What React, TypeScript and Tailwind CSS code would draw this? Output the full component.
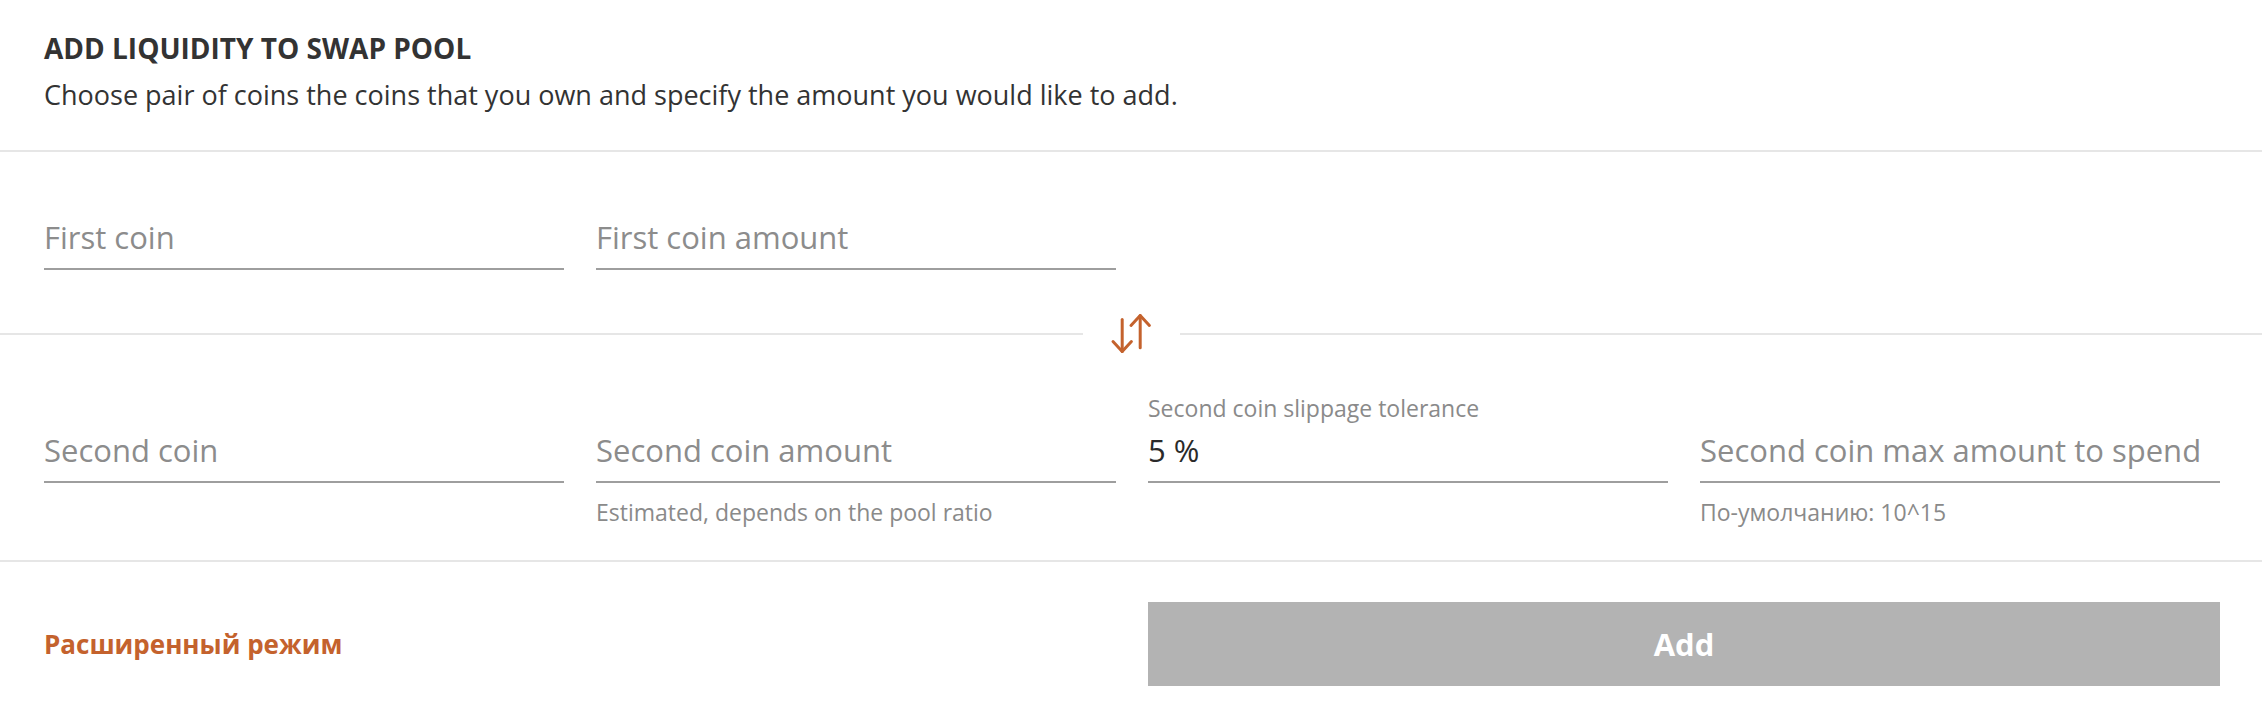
import React from "react";

function SwapIcon() {
  return (
    <svg width="40" height="40" viewBox="0 0 40 40" fill="none" stroke="#c4622d" strokeWidth="3" strokeLinecap="round" strokeLinejoin="round" className="overflow-visible">
      <path d="M11.2 5.5V37.5" />
      <path d="M2 27.5L11.2 37.5L20.4 27.5" />
      <path d="M29.2 1.5V33.8" />
      <path d="M20 11.5L29.2 1.5L38.4 11.5" />
    </svg>
  );
}

type FieldProps = {
  label?: string;
  placeholder?: string;
  value?: string;
  helper?: string;
  showHelperSpace?: boolean;
};

function Field({ label, placeholder, value, helper, showHelperSpace }: FieldProps) {
  return (
    <div className="flex flex-col">
      <div className="h-[28px] mb-[7px] text-[23px] leading-[28px] text-[#8a8a8a] whitespace-nowrap">
        {label ?? ""}
      </div>
      <div className="h-[54px] pb-[9px] border-b-2 border-[#9e9e9e]">
        <input
          readOnly
          value={value ?? ""}
          placeholder={placeholder}
          className="w-full h-[43px] text-[31px] leading-[43px] text-[#2a2a2a] placeholder:text-[#8c8c8c] bg-transparent outline-none"
        />
      </div>
      {showHelperSpace && (
        <div className="mt-[15px] h-[28px] text-[23px] leading-[28px] text-[#8a8a8a] whitespace-nowrap">
          {helper ?? ""}
        </div>
      )}
    </div>
  );
}

export default function App() {
  return (
    <div className="w-[2262px] bg-white font-['Open_Sans','Noto_Sans',sans-serif] text-[#333333]">
      <div className="pl-[44px] pr-[42px] pt-[32px] pb-[39px] border-b-2 border-[#e6e6e6]">
        <div className="text-[28px] leading-[32px] font-bold text-[#333333]">ADD LIQUIDITY TO SWAP POOL</div>
        <div className="mt-[15px] text-[27px] leading-[32px] text-[#333333]">
          Choose pair of coins the coins that you own and specify the amount you would like to add.
        </div>
      </div>

      <div className="pl-[44px] pr-[42px] pt-[29px] pb-[44px] grid grid-cols-4 gap-x-[32px]">
        <Field placeholder="First coin" />
        <Field placeholder="First coin amount" />
      </div>

      <div className="h-[40px] flex items-center">
        <div className="flex-1 h-[2px] bg-[#e6e6e6]" />
        <div className="w-[97px] flex justify-center">
          <SwapIcon />
        </div>
        <div className="flex-1 h-[2px] bg-[#e6e6e6]" />
      </div>

      <div className="pl-[44px] pr-[42px] pt-[40px] pb-[34px] grid grid-cols-4 gap-x-[32px] border-b-2 border-[#e6e6e6]">
        <Field placeholder="Second coin" showHelperSpace />
        <Field placeholder="Second coin amount" helper="Estimated, depends on the pool ratio" showHelperSpace />
        <Field label="Second coin slippage tolerance" value="5 %" showHelperSpace />
        <Field placeholder="Second coin max amount to spend" helper="По-умолчанию: 10^15" showHelperSpace />
      </div>

      <div className="pl-[44px] pr-[42px] pt-[40px] pb-[30px] grid grid-cols-4 gap-x-[32px] items-center">
        <div className="col-span-2 text-[26px] font-bold text-[#c4622d] whitespace-nowrap">Расширенный режим</div>
        <button className="col-span-2 h-[84px] bg-[#b3b3b3] text-white text-[31px] font-bold">Add</button>
      </div>
    </div>
  );
}
